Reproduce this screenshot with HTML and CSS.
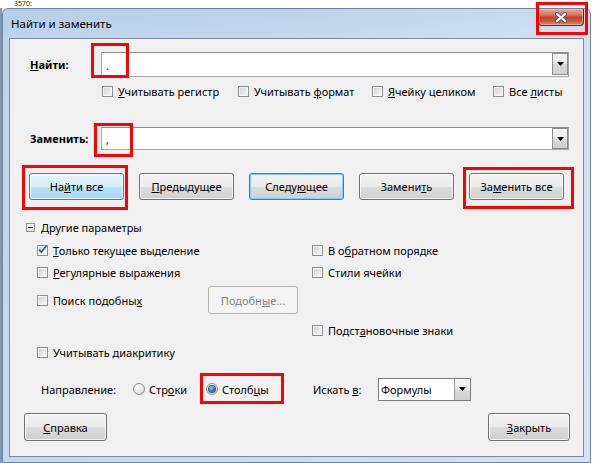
FILE: index.html
```html
<!DOCTYPE html>
<html lang="ru">
<head>
<meta charset="utf-8">
<title>Найти и заменить</title>
<link rel="stylesheet" href="styles.css">
</head>
<body>
<div class="desk-top"><span class="cell-text">3570:</span></div>
<div class="desk">
  <div class="window">
    <div class="titlebar">
      <span class="title">Найти и заменить</span>
      <div class="close">
        <svg width="14" height="11" viewBox="0 0 14 11"><path d="M3 2 L11 9 M11 2 L3 9" stroke="#5b5b5b" stroke-width="4" stroke-linecap="round"/><path d="M3 2 L11 9 M11 2 L3 9" stroke="#ffffff" stroke-width="2.2" stroke-linecap="round"/></svg>
      </div>
    </div>
    <div class="client">
      <div class="field-row find-row">
        <span class="field-label"><u>Н</u>айти:</span>
        <div class="combo combo-wide combo-find">
          <span class="combo-text">.</span>
          <span class="dd"><svg width="7" height="4" viewBox="0 0 7 4"><polygon points="0,0 7,0 3.5,4" fill="#000"/></svg></span>
        </div>
      </div>
      <div class="check-row">
        <label class="opt"><span class="cb"></span><span><u>У</u>читывать регистр</span></label>
        <label class="opt"><span class="cb"></span><span>Учитывать <u>ф</u>ормат</span></label>
        <label class="opt"><span class="cb"></span><span><u>Я</u>чейку целиком</span></label>
        <label class="opt"><span class="cb"></span><span>Все <u>л</u>исты</span></label>
      </div>
      <div class="field-row replace-row">
        <span class="field-label">Заменить:</span>
        <div class="combo combo-wide combo-replace">
          <span class="combo-text">,</span>
          <span class="dd"><svg width="7" height="4" viewBox="0 0 7 4"><polygon points="0,0 7,0 3.5,4" fill="#000"/></svg></span>
        </div>
      </div>
      <div class="btn-row">
        <button class="btn hot">На<u>й</u>ти все</button>
        <button class="btn"><u>П</u>редыдущее</button>
        <button class="btn default">Следу<u>ю</u>щее</button>
        <button class="btn">Замени<u>т</u>ь</button>
        <button class="btn">За<u>м</u>енить все</button>
      </div>
      <div class="section-head">
        <span class="exp"><span class="minus"></span></span>
        <span><u>Д</u>ругие параметры</span>
      </div>
      <div class="opts">
        <label class="opt c1 r1"><span class="cb checked"><svg class="tick" width="11" height="11" viewBox="0 0 11 11"><path d="M2 5.5 L4.3 8.2 L9.5 1.5" stroke="#3f5a9a" stroke-width="1.7" fill="none"/></svg></span><span><u>Т</u>олько текущее выделение</span></label>
        <label class="opt c2 r1"><span class="cb"></span><span>В о<u>б</u>ратном порядке</span></label>
        <label class="opt c1 r2"><span class="cb"></span><span><u>Р</u>егулярные выражения</span></label>
        <label class="opt c2 r2"><span class="cb"></span><span>Стили ячейки</span></label>
        <div class="similar c1 r3">
          <label class="opt opt-similar"><span class="cb"></span><span>Поиск подобны<u>х</u></span></label>
          <button class="btn disabled">Подобн<u>ы</u>е...</button>
        </div>
        <label class="opt c2 r4"><span class="cb"></span><span>Подст<u>а</u>новочные знаки</span></label>
        <label class="opt c1 r5"><span class="cb"></span><span>Учитывать диакритику</span></label>
      </div>
      <div class="dir-row">
        <span class="dir-label">Направление:</span>
        <label class="radio-opt ro1"><span class="rb"></span><span>Стр<u>о</u>ки</span></label>
        <label class="radio-opt ro2"><span class="rb on"></span><span>Столб<u>ц</u>ы</span></label>
        <span class="look-label">Искать <u>в</u>:</span>
        <div class="combo combo-small">
          <span class="combo-text">Формулы</span>
          <span class="dd"><svg width="7" height="4" viewBox="0 0 7 4"><polygon points="0,0 7,0 3.5,4" fill="#000"/></svg></span>
        </div>
      </div>
      <div class="bottom-row">
        <button class="btn btn-help"><u>С</u>правка</button>
        <button class="btn btn-close"><u>З</u>акрыть</button>
      </div>
    </div>
  </div>
</div>
<div class="mark mark-close"></div>
<div class="mark mark-find"></div>
<div class="mark mark-replace"></div>
<div class="mark mark-findall"></div>
<div class="mark mark-replaceall"></div>
<div class="mark mark-columns"></div>
</body>
</html>
```
FILE: styles.css
```css
* { box-sizing: border-box; }
html, body { margin: 0; padding: 0; }
body {
  width: 593px;
  height: 463px;
  overflow: hidden;
  position: relative;
  font-family: "Noto Sans", "Open Sans", sans-serif;
  font-size: 11px;
  color: #000;
  background: linear-gradient(to right, #7d97b8 0, #7d97b8 2px, #ffffff 2px);
}
u { text-decoration: underline; text-underline-offset: 1px; }

.desk-top { height: 8px; padding-left: 14px; background: #fff; }
.cell-text { display: block; font-size: 7px; line-height: 8px; color: #222; }

.desk { display: flex; padding-left: 2px; }

.window {
  width: 589px;
  height: 455px;
  border: 1px solid #6f8299;
  border-radius: 6px 6px 0 0;
  background:
    linear-gradient(90deg, rgba(255,255,255,0) 0%, rgba(255,255,255,0.12) 55%, rgba(255,255,255,0.28) 100%),
    linear-gradient(180deg, #b4cde8 0%, #bfd5ee 7%, #c4d9ef 100%);
  display: flex;
  flex-direction: column;
}

.titlebar {
  height: 29px;
  flex: none;
  display: flex;
  justify-content: space-between;
  align-items: flex-start;
}
.title {
  padding: 7px 0 0 8px;
  font-size: 11.5px;
  line-height: 16px;
  color: #000;
}
.close {
  width: 46px;
  height: 17px;
  margin-right: 6px;
  border: 1px solid #6a2418;
  border-top: none;
  border-radius: 0 0 4px 4px;
  background: linear-gradient(180deg, #e8a898 0%, #d77a64 35%, #c2452b 52%, #c9533a 75%, #dd8a72 100%);
  box-shadow: inset 0 0 0 1px rgba(255,210,200,0.45);
  display: flex;
  align-items: center;
  justify-content: center;
}

.client {
  margin: 0 6px;
  height: 419px;
  flex: none;
  border: 1px solid #7a899c;
  background: #f0f0f0;
  padding-top: 13px;
  display: flex;
  flex-direction: column;
}

/* text fields */
.field-row { display: flex; align-items: center; padding-left: 20px; }
.find-row { height: 25px; }
.replace-row { height: 23px; margin-top: 29px; }
.field-label { width: 71px; font-weight: bold; }

.combo {
  display: flex;
  background: #fff;
  border: 1px solid #a7a7a7;
  border-top-color: #8e8e8e;
}
.combo-wide { width: 468px; height: 100%; }
.combo-text { flex: 1; display: flex; align-items: center; padding-left: 4px; padding-top: 2px; }
.dd {
  width: 16px;
  flex: none;
  display: flex;
  align-items: center;
  justify-content: center;
  border: 1px solid #8c8c8c;
  background: linear-gradient(180deg, #f6f6f6 0%, #e9e9e9 50%, #d9d9d9 51%, #cfcfcf 100%);
}
.combo-find .dd { height: 22px; }
.combo-replace .dd { height: 21px; }

/* checkbox row */
.check-row {
  margin-top: 7px;
  height: 14px;
  padding-left: 92px;
  display: grid;
  grid-template-columns: 136px 134px 121px auto;
  align-items: center;
}
.opt { display: flex; align-items: center; gap: 5px; white-space: nowrap; }

.cb {
  width: 11px;
  height: 11px;
  flex: none;
  position: relative;
  border: 1px solid #8f8f8f;
  padding: 1px;
  background: #f6f6f6;
}
.cb::before {
  content: "";
  display: block;
  width: 100%;
  height: 100%;
  background: linear-gradient(135deg, #cfd2d6 0%, #e6e7e9 55%, #f6f6f6 100%);
}
.cb .tick { position: absolute; left: -1px; top: -2px; }

/* buttons */
.btn-row {
  margin-top: 23px;
  height: 27px;
  padding-left: 19px;
  display: flex;
  gap: 15px;
}
.btn {
  width: 95px;
  height: 27px;
  padding: 0;
  font: inherit;
  color: #000;
  border: 1px solid #707070;
  border-radius: 3px;
  background: linear-gradient(180deg, #f2f2f2 0%, #ebebeb 50%, #dddddd 51%, #cfcfcf 100%);
  box-shadow: inset 0 0 0 1px rgba(255,255,255,0.75);
}
.btn.hot {
  border-color: #3c7fb1;
  background: linear-gradient(180deg, #e6f4fc 0%, #d5eefb 50%, #bae2f8 51%, #a5d6f2 100%);
}
.btn.default {
  border-color: #3c7fb1;
  box-shadow: inset 0 0 0 1px #7fd0f6;
}
.btn.disabled {
  width: 90px;
  height: 28px;
  border-color: #adb2b5;
  background: #f4f4f4;
  color: #838383;
  box-shadow: none;
}

/* other parameters */
.section-head {
  margin-top: 19px;
  height: 17px;
  padding-left: 16px;
  display: flex;
  align-items: center;
  gap: 6px;
}
.exp {
  width: 9px;
  height: 9px;
  border: 1px solid #919191;
  background: linear-gradient(135deg, #ffffff, #dedede);
  display: flex;
  align-items: center;
  justify-content: center;
}
.minus { width: 5px; height: 1px; background: #1e1e1e; }

.opts {
  margin-top: 3px;
  padding-left: 27px;
  display: grid;
  grid-template-columns: 275px 1fr;
  grid-template-rows: 22px 22px 34px 26px 18px;
  align-items: center;
}
.c1 { grid-column: 1; }
.c2 { grid-column: 2; }
.r1 { grid-row: 1; }
.r2 { grid-row: 2; }
.r3 { grid-row: 3; }
.r4 { grid-row: 4; }
.r5 { grid-row: 5; }
.similar { display: flex; align-items: center; }
.opt-similar { width: 171px; }

/* direction row */
.dir-row {
  margin-top: 16px;
  height: 24px;
  padding-left: 31px;
  display: flex;
  align-items: center;
}
.dir-label { width: 92px; }
.radio-opt { display: flex; align-items: center; gap: 4px; }
.ro1 { width: 73px; }
.ro2 { width: 107px; }
.rb {
  width: 12px;
  height: 12px;
  flex: none;
  border-radius: 50%;
  border: 1px solid #8f8f8f;
  background: radial-gradient(circle at 35% 30%, #ffffff 0%, #ececec 45%, #cfcfcf 100%);
  display: flex;
  align-items: center;
  justify-content: center;
}
.rb.on::after {
  content: "";
  width: 6px;
  height: 6px;
  border-radius: 50%;
  background: radial-gradient(circle at 40% 35%, #9fdcff 0%, #2f7fd0 45%, #0f3f80 100%);
  box-shadow: 0 0 0 1px #2b4f7d;
}
.look-label { width: 65px; }
.combo-small {
  width: 93px;
  height: 23px;
  border: 1px solid #7d7d7d;
}
.combo-small .combo-text { padding-left: 2px; padding-top: 0; }
.combo-small .dd { height: 21px; border-color: #9a9a9a; border-top: none; border-right: none; border-bottom: none; }

/* bottom buttons */
.bottom-row {
  margin-top: 12px;
  height: 28px;
  padding: 0 13px 0 14px;
  display: flex;
  justify-content: space-between;
}
.btn-help { width: 83px; height: 28px; }
.btn-close { width: 82px; height: 28px; }

/* red annotation frames */
.mark {
  position: absolute;
  border: 3px solid #ff0000;
}
.mark-close { left: 536px; top: 2px; width: 52px; height: 33px; }
.mark-find { left: 91px; top: 43px; width: 38px; height: 35px; }
.mark-replace { left: 94px; top: 123px; width: 39px; height: 34px; }
.mark-findall { left: 22px; top: 165px; width: 106px; height: 45px; }
.mark-replaceall { left: 463px; top: 167px; width: 111px; height: 42px; }
.mark-columns { left: 200px; top: 373px; width: 84px; height: 31px; }
```
